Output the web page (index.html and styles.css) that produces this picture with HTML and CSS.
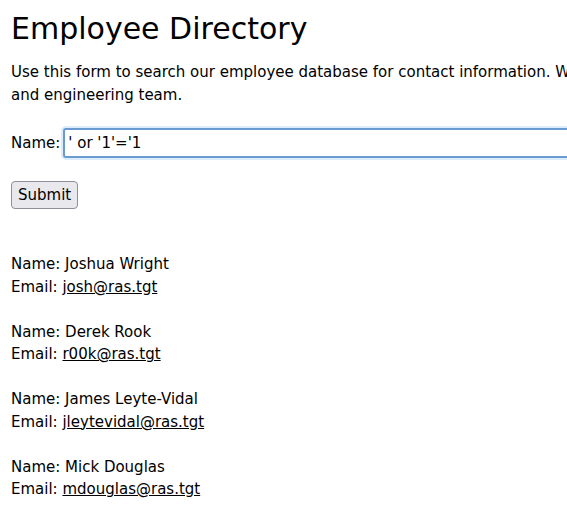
FILE: index.html
```html
<!DOCTYPE html>
<html>
<head>
<meta charset="utf-8">
<title>Employee Directory</title>
<link rel="stylesheet" href="styles.css">
</head>
<body>
<h1 class="title">Employee Directory</h1>
<p class="intro">Use this form to search our employee database for contact information. We only list our sales<br>and engineering team.</p>
<form class="search">
  <div class="field">
    <label class="label" for="name">Name:</label>
    <input class="input" id="name" type="text" value="' or '1'='1">
  </div>
  <div class="actions">
    <button class="btn" type="button">Submit</button>
  </div>
</form>
<div class="results">
  <p class="entry">Name: Joshua Wright<br>Email: <a class="mail" href="#">josh@ras.tgt</a></p>
  <p class="entry">Name: Derek Rook<br>Email: <a class="mail" href="#">r00k@ras.tgt</a></p>
  <p class="entry">Name: James Leyte-Vidal<br>Email: <a class="mail" href="#">jleytevidal@ras.tgt</a></p>
  <p class="entry">Name: Mick Douglas<br>Email: <a class="mail" href="#">mdouglas@ras.tgt</a></p>
</div>
</body>
</html>
```
FILE: styles.css
```css
html, body {
  overflow: hidden;
}
body {
  margin: 0;
  padding: 0 0 0 11px;
  width: 800px;
  font-family: "DejaVu Sans", sans-serif;
  font-size: 15px;
  line-height: 22.5px;
  color: #000;
  background: #fff;
}
.title {
  font-size: 30px;
  font-weight: normal;
  line-height: 36px;
  margin: 11px 0 14px;
  white-space: nowrap;
}
.intro {
  margin: 0 0 15px;
  white-space: nowrap;
}
.search {
  margin: 0;
}
.field {
  display: flex;
  align-items: center;
  gap: 3px;
  height: 44px;
}
.label {
  white-space: nowrap;
}
.input {
  width: 600px;
  height: 30px;
  box-sizing: border-box;
  border: 2px solid #6a9bd0;
  border-radius: 3px;
  box-shadow: 0 0 0 2px #dcecfb;
  padding: 0 3px;
  font-family: "DejaVu Sans", sans-serif;
  font-size: 15px;
  color: #000;
  outline: none;
}
.actions {
  margin-top: 16px;
}
.btn {
  display: block;
  box-sizing: border-box;
  height: 28px;
  font-family: "DejaVu Sans", sans-serif;
  font-size: 15px;
  color: #000;
  background: #e9e9ed;
  border: 1px solid #8f8f9d;
  border-radius: 4px;
  padding: 0 6px;
  line-height: 26px;
}
.results {
  margin-top: 44px;
}
.entry {
  margin: 0 0 22.5px;
}
.mail {
  color: #000;
  text-decoration: underline;
}
```
